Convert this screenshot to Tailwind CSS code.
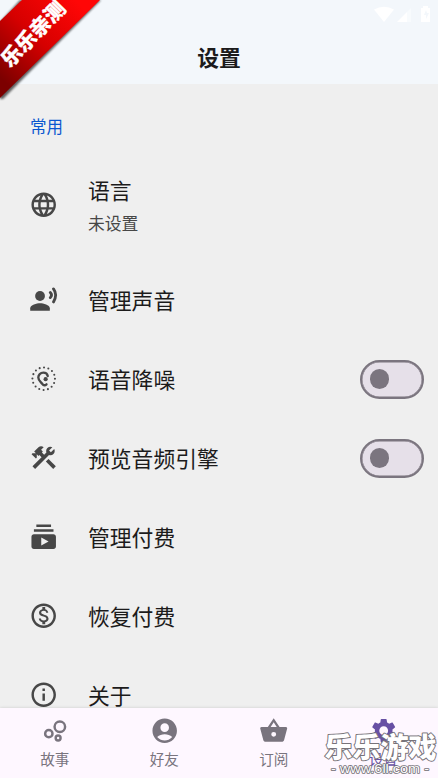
<!DOCTYPE html>
<html lang="zh-CN">
<head>
<meta charset="utf-8">
<title>设置</title>
<script src="https://cdn.jsdelivr.net/npm/@tailwindcss/browser@4"></script>
</head>
<body class="relative w-[438px] h-[778px] overflow-hidden bg-[#efefef] font-['Noto_Sans_CJK_SC',sans-serif] text-[#1c1b1b]">
<div class="flex flex-col h-full">
  <header class="flex flex-col h-[84px] shrink-0 bg-[#f3f7fb]">
    <div class="h-[29.5px] flex justify-end pt-[5px] pr-[7px]">
      <svg class="w-[58px] h-[18px]" viewBox="0 0 58 18" fill="#fff"><path d="M1 4.500Q11 -1 21 4.500L11 17z"/><path d="M24 17L34 7v10z"/><path d="M34 7l4-4v14h-4z" opacity=".45"/><path fill-rule="evenodd" d="M50 1h5v2h2v14h-9V3h2zM53 5l-2 5h2v4l3-6h-2z"/></svg>
    </div>
    <h1 class="h-[54px] flex items-center justify-center text-[21.8px] leading-[30px] font-bold">设置</h1>
  </header>
  <main class="flex-1 min-h-0 overflow-hidden">
    <div class="h-[81.5px] pt-[29.5px] pl-[30px] text-[16.5px] leading-6 text-[#0b57d0]">常用</div>
    <ul class="text-[21.8px] leading-[30px]">
      <li class="flex items-center h-[79px] pl-[29px]">
        <svg class="w-[29.400px] h-[29.400px] mr-[29.600px]" viewBox="0 0 24 24" fill="#474747"><path d="M11.990 2C6.470 2 2 6.480 2 12s4.470 10 9.990 10C17.520 22 22 17.520 22 12S17.520 2 11.990 2zm6.930 6h-2.950c-.32-1.250-.78-2.450-1.380-3.560 1.840.63 3.370 1.910 4.330 3.560zM12 4.040c.83 1.200 1.480 2.530 1.910 3.960h-3.820c.43-1.430 1.080-2.760 1.910-3.960zM4.260 14C4.100 13.360 4 12.690 4 12s.1-1.360.26-2h3.380c-.08.66-.14 1.320-.14 2s.06 1.340.14 2H4.260zm.82 2h2.950c.32 1.250.78 2.450 1.380 3.560-1.840-.63-3.370-1.900-4.330-3.560zm2.950-8H5.080c.96-1.660 2.490-2.930 4.330-3.560C8.810 5.550 8.350 6.750 8.030 8zM12 19.960c-.83-1.200-1.480-2.530-1.910-3.960h3.820c-.43 1.430-1.080 2.760-1.910 3.960zM14.340 14H9.660c-.09-.66-.16-1.320-.16-2s.07-1.350.16-2h4.680c.09.65.16 1.320.16 2s-.07 1.340-.16 2zm.25 5.560c.6-1.110 1.060-2.310 1.380-3.560h2.950c-.96 1.650-2.490 2.930-4.330 3.560zM16.360 14c.08-.66.14-1.320.14-2s-.06-1.340-.14-2h3.380c.16.64.26 1.310.26 2s-.1 1.360-.26 2h-3.380z"/></svg>
        <div><div>语言</div><div class="text-[16.8px] leading-6 mt-[6.5px] text-[#474747]">未设置</div></div>
      </li>
      <li class="flex items-center h-[79px] mt-4 pl-[29px]">
        <svg class="w-[29.400px] h-[29.400px] mr-[29.600px]" viewBox="0 0 24 24" fill="#474747"><circle cx="9" cy="9" r="4"/><path d="M9 15c-2.670 0-8 1.340-8 4v2h16v-2c0-2.660-5.330-4-8-4z"/><path d="M17.400 6.200c1.150 1.200 1.150 2.900 0 4.100M20 3.200c2.200 3 2.200 7 0 10.600" fill="none" stroke="#474747" stroke-width="2.300" stroke-linecap="round"/></svg>
        <span class="pb-px">管理声音</span>
      </li>
      <li class="flex items-center h-[79px] pl-[29px] pr-[14px]">
        <svg class="w-[29.400px] h-[29.400px] mr-[29.600px]" viewBox="0 0 24 24" fill="none" stroke="#474747" stroke-linecap="round"><circle cx="12" cy="12" r="9.200" stroke-width="1.700" stroke-dasharray="0 3.613"/><path stroke-width="1.900" d="M15.300 9.800C15 8.200 13.500 7.100 11.700 7.100 9.300 7.100 7.600 8.900 7.600 11c0 2.600 2 3.600 3.400 5.400.8 1.200 2.300 1.200 3.300.2"/><circle cx="13.600" cy="12.400" r="1.700" fill="#474747" stroke="none"/></svg>
        <span class="pb-px">语音降噪</span>
        <span class="ml-auto flex items-center w-[64px] h-[39px] rounded-full border-2 border-[#7b757f] bg-[#e6e0e9] inset-shadow-[0_0_0_0.5px_#7b757f] pl-[7.500px]"><span class="size-[19.500px] rounded-full bg-[#7b757f]"></span></span>
      </li>
      <li class="flex items-center h-[79px] pl-[29px] pr-[14px]">
        <svg class="w-[29.400px] h-[29.400px] mr-[29.600px]" viewBox="0 0 24 24" fill="#474747"><path d="M13.783 15.172l2.121-2.121 5.996 5.996-2.121 2.121z"/><path d="M17.500 10c1.930 0 3.500-1.570 3.500-3.500 0-.58-.16-1.120-.41-1.600l-2.700 2.700-1.490-1.490 2.700-2.700c-.48-.25-1.020-.41-1.600-.41C15.570 3 14 4.570 14 6.500c0 .41.08.8.21 1.160l-1.850 1.850-1.780-1.780.71-.71-1.410-1.410L12 3.490c-1.170-1.170-3.070-1.170-4.240 0L4.220 7.030l1.410 1.410H2.810l-.71.71 3.540 3.540.71-.71V9.150l1.410 1.410.71-.71 1.780 1.780-7.410 7.410 2.120 2.120L16.340 9.790c.36.13.75.21 1.160.21z"/></svg>
        <span class="pb-px">预览音频引擎</span>
        <span class="ml-auto flex items-center w-[64px] h-[39px] rounded-full border-2 border-[#7b757f] bg-[#e6e0e9] inset-shadow-[0_0_0_0.5px_#7b757f] pl-[7.500px]"><span class="size-[19.500px] rounded-full bg-[#7b757f]"></span></span>
      </li>
      <li class="flex items-center h-[79px] pl-[29px]">
        <svg class="w-[29.400px] h-[29.400px] mr-[29.600px]" viewBox="0 0 24 24" fill="#474747"><path d="M20 8H4V6h16v2zm-2-6H6v2h12V2zm4 10v8c0 1.100-.9 2-2 2H4c-1.100 0-2-.9-2-2v-8c0-1.100.9-2 2-2h16c1.100 0 2 .9 2 2zm-6 4l-6-3.270v6.530L16 16z"/></svg>
        <span class="pb-px">管理付费</span>
      </li>
      <li class="flex items-center h-[79px] pl-[29px]">
        <svg class="w-[29.400px] h-[29.400px] mr-[29.600px]" viewBox="0 0 24 24" fill="#474747"><path d="M12 2C6.480 2 2 6.480 2 12s4.480 10 10 10 10-4.480 10-10S17.520 2 12 2zm0 18c-4.410 0-8-3.590-8-8s3.590-8 8-8 8 3.590 8 8-3.590 8-8 8zm.31-8.860c-1.770-.45-2.340-.94-2.340-1.670 0-.84.79-1.430 2.100-1.430 1.380 0 1.900.66 1.940 1.640h1.710c-.05-1.340-.87-2.570-2.490-2.970V5H10.900v1.690c-1.510.32-2.720 1.300-2.720 2.810 0 1.790 1.490 2.690 3.660 3.210 1.950.46 2.340 1.150 2.340 1.870 0 .53-.39 1.390-2.100 1.390-1.600 0-2.230-.72-2.320-1.640H8.040c.1 1.700 1.360 2.660 2.860 2.970V19h2.340v-1.670c1.520-.29 2.720-1.160 2.730-2.770-.01-2.200-1.900-2.960-3.660-3.420z"/></svg>
        <span class="pb-px">恢复付费</span>
      </li>
      <li class="flex items-center h-[79px] pl-[29px]">
        <svg class="w-[29.400px] h-[29.400px] mr-[29.600px]" viewBox="0 0 24 24" fill="#474747"><path d="M11 7h2v2h-2zm0 4h2v6h-2zm1-9C6.480 2 2 6.480 2 12s4.480 10 10 10 10-4.480 10-10S17.520 2 12 2zm0 18c-4.410 0-8-3.590-8-8s3.590-8 8-8 8 3.590 8 8-3.590 8-8 8z"/></svg>
        <span class="pb-px">关于</span>
      </li>
    </ul>
  </main>
  <nav class="relative grid grid-cols-4 h-[70px] shrink-0 bg-[#fef7ff] shadow-[0_0_3px_rgba(0,0,0,0.15)] text-[14.600px] leading-5 text-[#79747e]">
    <a class="flex flex-col items-center pt-[8px]"><svg class="size-[29.400px]" viewBox="0 0 24 24" fill="none" stroke="#79747e" stroke-width="2"><circle cx="7.200" cy="14.400" r="3"/><circle cx="14.800" cy="18" r="2"/><circle cx="16.200" cy="8.800" r="4.300"/></svg><span class="mt-[4px]">故事</span></a>
    <a class="flex flex-col items-center pt-[8px]"><svg class="size-[29.400px]" viewBox="0 0 24 24" fill="#79747e"><path d="M12 2C6.480 2 2 6.480 2 12s4.480 10 10 10 10-4.480 10-10S17.520 2 12 2zm0 4c1.930 0 3.500 1.570 3.500 3.500S13.930 13 12 13s-3.500-1.570-3.500-3.500S10.070 6 12 6zm0 14c-2.030 0-4.430-.82-6.140-2.880C7.550 15.800 9.680 15 12 15s4.450.8 6.140 2.120C16.430 19.180 14.030 20 12 20z"/></svg><span class="mt-[4px]">好友</span></a>
    <a class="flex flex-col items-center pt-[8px]"><svg class="size-[29.400px]" viewBox="0 0 24 24" fill="#79747e"><path fill-rule="evenodd" d="M12 1.800L16.800 9H22c.7 0 1.100.6 1 1.200l-2.500 9.400c-.2.900-1 1.500-1.900 1.500H5.400c-.9 0-1.700-.6-1.900-1.500L1 10.200C.9 9.600 1.300 9 2 9h5.200zM9.500 9h5L12 5.200zM12 13a2 2 0 100 4 2 2 0 000-4z"/></svg><span class="mt-[4px]">订阅</span></a>
    <a class="flex flex-col items-center pt-[8px] text-[#6750a4]"><svg class="size-[29.400px]" viewBox="0 0 24 24" fill="#6750a4"><path d="M19.140 12.940c.04-.3.06-.61.06-.94 0-.32-.02-.64-.07-.94l2.030-1.580c.18-.14.23-.41.12-.61l-1.920-3.320c-.12-.22-.37-.29-.59-.22l-2.390.96c-.5-.38-1.030-.7-1.620-.94l-.36-2.540c-.04-.24-.24-.41-.48-.41h-3.840c-.24 0-.43.17-.47.41l-.36 2.540c-.59.24-1.130.57-1.620.94l-2.390-.96c-.22-.08-.47 0-.59.22L2.740 8.870c-.12.21-.08.47.12.61l2.030 1.580c-.05.3-.09.63-.09.94s.02.64.07.94l-2.030 1.580c-.18.14-.23.41-.12.61l1.920 3.320c.12.22.37.29.59.22l2.390-.96c.5.38 1.030.7 1.620.94l.36 2.540c.05.24.24.41.48.41h3.840c.24 0 .44-.17.47-.41l.36-2.540c.59-.24 1.130-.56 1.620-.94l2.390.96c.22.08.47 0 .59-.22l1.920-3.320c.12-.22.07-.47-.12-.61l-2.010-1.580zM12 15.600c-1.980 0-3.600-1.620-3.600-3.600s1.620-3.600 3.600-3.600 3.600 1.620 3.600 3.600-1.620 3.600-3.600 3.600z"/></svg><span class="mt-[4px]">设置</span></a>
  </nav>
</div>

<!-- corner ribbon -->
<svg class="absolute left-0 top-0 w-[110px] h-[110px]" viewBox="0 0 110 110">
  <defs><linearGradient id="red" gradientUnits="userSpaceOnUse" x1="80" y1="5" x2="5" y2="82"><stop offset="0" stop-color="#ff0606"/><stop offset=".5" stop-color="#d60000"/><stop offset="1" stop-color="#7c0000"/></linearGradient><filter id="soft"><feGaussianBlur stdDeviation="1"/></filter></defs>
  <path d="M20 0H101L3 99L0 99V22z" fill="#000" opacity=".6" filter="url(#soft)"/>
  <path d="M22 0H100L0 98V21z" fill="url(#red)"/>
  <text transform="translate(10 68.500) rotate(-46)" font-family="Noto Sans CJK SC, sans-serif" font-weight="900" font-size="20.500" fill="#fff" stroke="#fff" stroke-width=".3">乐乐亲测</text>
</svg>

<!-- watermark -->
<svg class="absolute left-[318px] top-[724px] w-[120px] h-[54px]" viewBox="0 0 120 54">
  <text x="6.500" y="33.500" fill="#fff" stroke="#77737a" stroke-width="2" stroke-linejoin="round" paint-order="stroke" font-family="Noto Sans CJK SC, sans-serif" font-size="28" font-weight="900" textLength="112" lengthAdjust="spacingAndGlyphs">乐乐游戏</text>
  <text x="13" y="49" fill="#fff" stroke="#77737a" stroke-width="1.600" stroke-linejoin="round" paint-order="stroke" font-family="Liberation Sans, sans-serif" font-size="13" textLength="98" lengthAdjust="spacingAndGlyphs">- www.6ll.com -</text>
</svg>
</body>
</html>
